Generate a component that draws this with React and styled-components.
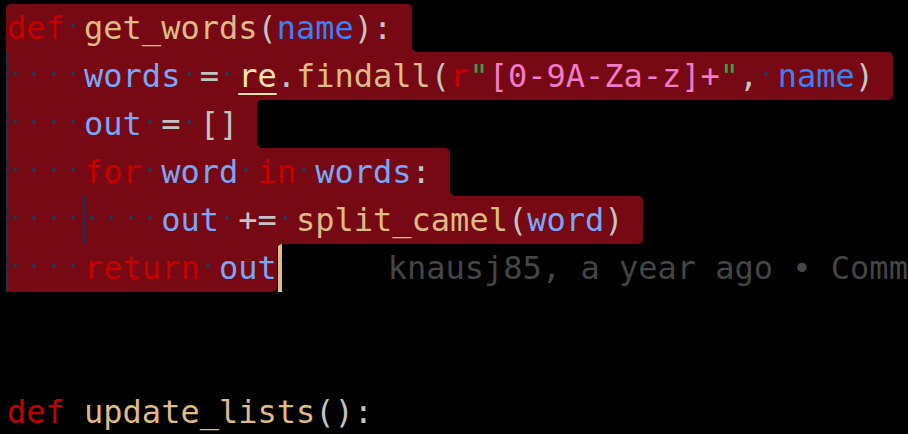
import React from "react";
import styled, { createGlobalStyle, css } from "styled-components";

const SEL = "#760913";
const R = 5;

const Global = createGlobalStyle`
  html, body { margin: 0; padding: 0; background: #000; }
  body { overflow: hidden; }
`;

const Editor = styled.div`
  width: 908px;
  height: 434px;
  overflow: hidden;
  background: #000;
  padding: 4px 0 0 7px;
  box-sizing: border-box;
  font-family: "DejaVu Sans Mono", "Liberation Mono", monospace;
  font-size: 32px;
  line-height: 48px;
  white-space: pre;
`;

const Line = styled.div`
  position: relative;
  display: flex;
  align-items: stretch;
  height: 48px;
  & > * {
    flex-shrink: 0;
  }
`;

const fillet = (pos) => css`
  &::after {
    content: "";
    position: absolute;
    left: 100%;
    ${pos === "top" ? "top: 0;" : "bottom: 0;"}
    width: ${R}px;
    height: ${R}px;
    background: radial-gradient(
      circle at ${pos === "top" ? "100% 100%" : "100% 0"},
      transparent ${R - 0.5}px,
      ${SEL} ${R}px
    );
  }
`;

const Selection = styled.span`
  position: relative;
  display: inline-block;
  height: 48px;
  margin-left: -1px;
  padding-left: 1px;
  padding-right: ${(p) => (p.$eol ? "1ch" : "0")};
  background: ${SEL};
  border-radius: ${(p) =>
    `${p.$tl ? R : 0}px ${p.$tr ? R : 0}px ${p.$br ? R : 0}px ${p.$bl ? R : 0}px`};
  ${(p) => p.$filletTop && fillet("top")}
  &::before {
    ${(p) => (p.$filletBottom ? "" : "display: none;")}
    content: "";
    position: absolute;
    left: 100%;
    bottom: 0;
    width: ${R}px;
    height: ${R}px;
    background: radial-gradient(circle at 100% 0, transparent ${R - 0.5}px, ${SEL} ${R}px);
  }
`;

const COLORS = {
  kw: "#c40000",
  fn: "#dfba86",
  param: "#3a80f6",
  var: "#7ba6f7",
  punc: "#c4c4c4",
  mod: "#f3e0b4",
  dot: "#b8c0cc",
  strPrefix: "#c40000",
  quote: "#2aa74a",
  str: "#ef7bc9",
};

const Tok = styled.span`
  color: ${(p) => COLORS[p.$t] || "#c4c4c4"};
  ${(p) =>
    p.$underline &&
    css`
      text-decoration: underline;
      text-decoration-color: #f3e0b4;
      text-decoration-thickness: 2px;
      text-underline-offset: 6px;
    `}
`;

const Space = styled.span`
  position: relative;
  display: inline-block;
  width: 1ch;
  height: 48px;
  vertical-align: top;
  &::after {
    content: "";
    position: absolute;
    left: calc(50% - 3.5px);
    top: 20px;
    width: 4px;
    height: 4px;
    border-radius: 50%;
    background: #183c62;
  }
`;

const Guide = styled.span`
  position: absolute;
  top: 0;
  bottom: 0;
  left: calc(${(p) => p.$col}ch - 1px);
  width: 2px;
  background: #0f3558;
  z-index: 1;
`;

const Cursor = styled.span`
  display: inline-block;
  width: 4px;
  height: 48px;
  margin-left: 1px;
  background: #dfbb88;
`;

const Blame = styled.span`
  margin-left: 106px;
  color: #454545;
`;

const Bullet = styled.span`
  color: #454545;
`;

function renderTokens(tokens, showWs) {
  const out = [];
  tokens.forEach(([text, type, extra], i) => {
    if (type === "ws") {
      if (showWs) {
        for (let k = 0; k < text.length; k++) out.push(<Space key={`${i}-${k}`} />);
      } else {
        out.push(<span key={i}>{text}</span>);
      }
    } else {
      out.push(
        <Tok key={i} $t={type} $underline={extra === "u"}>
          {text}
        </Tok>
      );
    }
  });
  return out;
}

const lines = [
  {
    tokens: [
      ["def", "kw"], [" ", "ws"], ["get_words", "fn"], ["(", "punc"], ["name", "param"], ["):", "punc"],
    ],
    sel: { eol: true, tl: true, tr: true, filletBottom: true },
  },
  {
    tokens: [
      ["    ", "ws"], ["words", "var"], [" ", "ws"], ["=", "punc"], [" ", "ws"], ["re", "mod", "u"],
      [".", "dot"], ["findall", "fn"], ["(", "punc"], ["r", "strPrefix"], ['"', "quote"],
      ["[0-9A-Za-z]+", "str"], ['"', "quote"], [",", "punc"], [" ", "ws"], ["name", "param"], [")", "punc"],
    ],
    sel: { eol: true, tr: true, br: true },
    guides: [0],
  },
  {
    tokens: [["    ", "ws"], ["out", "var"], [" ", "ws"], ["=", "punc"], [" ", "ws"], ["[]", "punc"]],
    sel: { eol: true, filletTop: true, filletBottom: true },
    guides: [0],
  },
  {
    tokens: [
      ["    ", "ws"], ["for", "kw"], [" ", "ws"], ["word", "var"], [" ", "ws"], ["in", "kw"], [" ", "ws"],
      ["words", "var"], [":", "punc"],
    ],
    sel: { eol: true, tr: true, filletBottom: true },
    guides: [0],
  },
  {
    tokens: [
      ["        ", "ws"], ["out", "var"], [" ", "ws"], ["+=", "punc"], [" ", "ws"], ["split_camel", "fn"],
      ["(", "punc"], ["word", "var"], [")", "punc"],
    ],
    sel: { eol: true, tr: true, br: true },
    guides: [0, 4],
  },
  {
    tokens: [["    ", "ws"], ["return", "kw"], [" ", "ws"], ["out", "var"]],
    sel: { eol: false, br: true, bl: true, filletTop: true },
    guides: [0],
    cursor: true,
    blame: true,
  },
  { tokens: [] },
  { tokens: [] },
  {
    tokens: [["def", "kw"], [" ", "ws"], ["update_lists", "fn"], ["()", "punc"], [":", "punc"]],
  },
];

export default function App() {
  return (
    <>
      <Global />
      <Editor>
        {lines.map((ln, i) => (
          <Line key={i}>
            {(ln.guides || []).map((c) => (
              <Guide key={c} $col={c} />
            ))}
            {ln.sel ? (
              <Selection
                $eol={ln.sel.eol}
                $tl={ln.sel.tl}
                $tr={ln.sel.tr}
                $br={ln.sel.br}
                $bl={ln.sel.bl}
                $filletTop={ln.sel.filletTop}
                $filletBottom={ln.sel.filletBottom}
              >
                {renderTokens(ln.tokens, true)}
              </Selection>
            ) : (
              <span>{renderTokens(ln.tokens, false)}</span>
            )}
            {ln.cursor && <Cursor />}
            {ln.blame && (
              <Blame>
                knausj85, a year ago <Bullet>•</Bullet> Comm
              </Blame>
            )}
          </Line>
        ))}
      </Editor>
    </>
  );
}
